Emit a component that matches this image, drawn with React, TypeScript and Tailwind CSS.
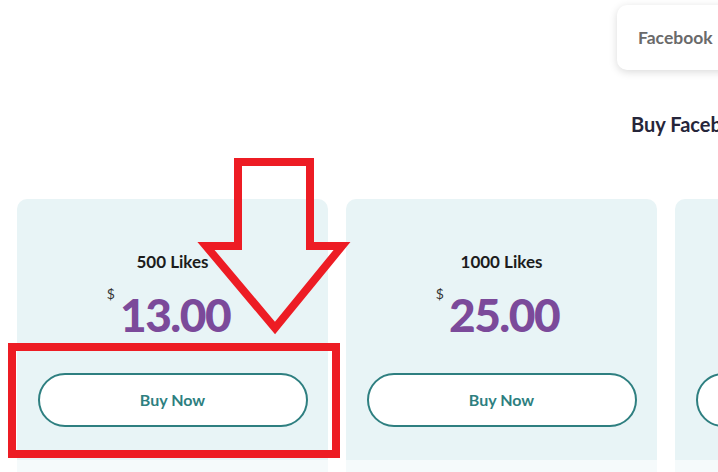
import React from "react";

const cards = [
  { title: "500 Likes", price: "13.00" },
  { title: "1000 Likes", price: "25.00" },
  { title: "2500 Likes", price: "55.00" },
];

export default function App() {
  return (
    <div
      className="relative w-[718px] h-[472px] overflow-hidden bg-white"
      style={{ fontFamily: "Lato, 'Noto Sans', sans-serif" }}
    >
      <div className="flex flex-col">
        <div className="pl-[617px] pt-[5px]">
          <div className="w-[200px] h-[65px] rounded-[10px] bg-white shadow-[0_2px_8px_rgba(0,0,0,0.15)] flex items-center pl-[21px] pt-[2px]">
            <span className="text-[17.5px] font-bold text-[#6a6a6a] whitespace-nowrap">Facebook</span>
          </div>
        </div>
        <div className="pl-[631px] mt-[40px] h-[28px] flex items-center">
          <span className="text-[20px] font-bold text-[#26263a] whitespace-nowrap">Buy Facebook Likes</span>
        </div>
        <div className="flex gap-[18px] pl-[17px] mt-[61px]">
          {cards.map((c) => (
            <div key={c.title} className="w-[311px] shrink-0 flex flex-col">
              <div className="h-[261px] rounded-t-[10px] bg-[#e8f4f6] flex flex-col items-center px-[20px]">
                <div className="mt-[52px] h-[22px] flex items-center text-[17px] font-bold text-[#1c1c1c]">
                  {c.title}
                </div>
                <div className="mt-[17px] flex items-start mr-[8px]">
                  <span className="text-[14px] text-[#333] mt-[-3px] mr-[5px] leading-none">$</span>
                  <span className="text-[46px] font-black text-[#7b4a9a] leading-[50px] tracking-[-1.5px]">{c.price}</span>
                </div>
                <button className="mt-[33px] w-[270px] h-[54px] shrink-0 rounded-full border-2 border-[#2e7f80] bg-white text-[16px] font-bold text-[#2e7f80]">
                  Buy Now
                </button>
              </div>
              <div className="h-[20px] bg-[#f5fafb]" />
            </div>
          ))}
        </div>
      </div>
      <svg className="absolute left-0 top-0" width="718" height="472" viewBox="0 0 718 472">
        <polygon
          points="238,162 310,162 310,246 342,246 275,328 206,246 238,246"
          fill="none"
          stroke="#ed1c24"
          strokeWidth="8"
          strokeLinejoin="miter"
        />
        <rect x="12" y="347" width="324" height="107" fill="none" stroke="#ed1c24" strokeWidth="8" />
      </svg>
    </div>
  );
}
